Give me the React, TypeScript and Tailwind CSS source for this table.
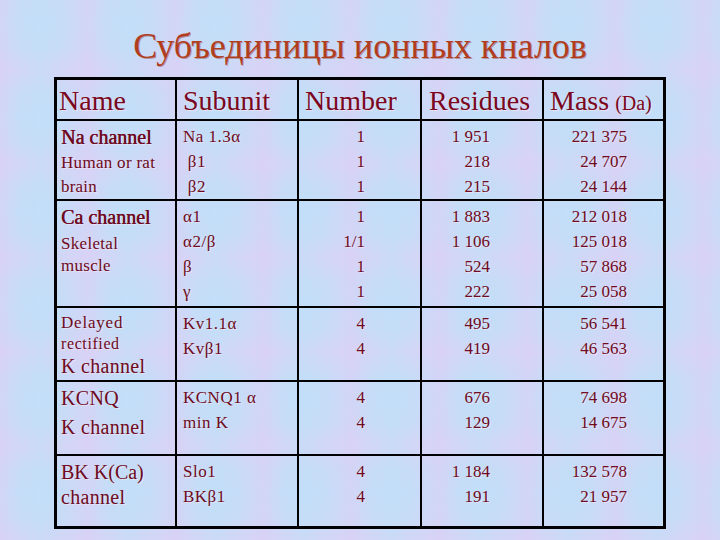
import React from "react";

type Line = { t: React.ReactNode; size?: number; lh: number; cls?: string };

const serif = "font-['Liberation_Serif','Times_New_Roman',serif]";
const ink = "text-[#6e0b22] [text-shadow:1px_1px_0_rgba(255,235,245,0.55)]";

function NameCell({ lines }: { lines: Line[] }) {
  return (
    <div className="pl-[4px] pt-[3px] flex flex-col">
      {lines.map((l, i) => (
        <div
          key={i}
          className={`whitespace-nowrap ${l.cls ?? ""}`}
          style={{ lineHeight: `${l.lh}px`, fontSize: `${l.size ?? 17}px` }}
        >
          {l.t}
        </div>
      ))}
    </div>
  );
}

function DataCell({ vals, align, pad, track }: { vals: React.ReactNode[]; align: "left" | "right"; pad: string; track?: boolean }) {
  return (
    <div className={`border-l-2 border-black pt-[3px] flex flex-col ${pad} ${align === "right" ? "items-end" : "items-start"}`}>
      {vals.map((v, i) => (
        <div key={i} className={`leading-[25px] text-[17px] whitespace-pre ${track ? "tracking-[0.5px]" : ""}`}>
          {v}
        </div>
      ))}
    </div>
  );
}

const cols = "grid grid-cols-[118px_122px_123px_122px_121px]";

type Row = {
  h: string;
  name: Line[];
  sub: React.ReactNode[];
  num: string[];
  res: string[];
  mass: string[];
};

const heavy = "[text-shadow:0.5px_0_0_#6e0b22,1px_1px_0_rgba(255,235,245,0.55)]";

const rows: Row[] = [
  {
    h: "h-[80px]",
    name: [
      { t: "Na channel", size: 20, lh: 26, cls: heavy },
      { t: "Human or rat", lh: 26, cls: "tracking-[0.3px]" },
      { t: "brain", lh: 22, cls: "tracking-[0.2px]" },
    ],
    sub: ["Na 1.3α", " β1", " β2"],
    num: ["1", "1", "1"],
    res: ["1 951", "218", "215"],
    mass: ["221 375", "24 707", "24 144"],
  },
  {
    h: "h-[107px]",
    name: [
      { t: "Ca channel", size: 20, lh: 26, cls: heavy },
      { t: "Skeletal", lh: 28, cls: "tracking-[0.3px]" },
      { t: "muscle", lh: 16, cls: "tracking-[0.3px]" },
    ],
    sub: ["α1", "α2/β", "β", "γ"],
    num: ["1", "1/1", "1", "1"],
    res: ["1 883", "1 106", "524", "222"],
    mass: ["212 018", "125 018", "57 868", "25 058"],
  },
  {
    h: "h-[74px]",
    name: [
      { t: "Delayed", lh: 24, cls: "tracking-[0.8px]" },
      { t: "rectified", size: 16, lh: 18, cls: "tracking-[0.6px]" },
      { t: "K channel", size: 20, lh: 26, cls: "tracking-[0.3px]" },
    ],
    sub: ["Kv1.1α", "Kvβ1"],
    num: ["4", "4"],
    res: ["495", "419"],
    mass: ["56 541", "46 563"],
  },
  {
    h: "h-[74px]",
    name: [
      { t: "KCNQ", size: 20, lh: 26, cls: "tracking-[0.3px]" },
      { t: "K channel", size: 20, lh: 32, cls: "tracking-[0.3px]" },
    ],
    sub: ["KCNQ1 α", "min K"],
    num: ["4", "4"],
    res: ["676", "129"],
    mass: ["74 698", "14 675"],
  },
  {
    h: "h-[70px]",
    name: [
      { t: "BK K(Ca)", size: 20, lh: 26 },
      { t: "channel", size: 20, lh: 24, cls: "tracking-[0.3px]" },
    ],
    sub: ["Slo1", "BKβ1"],
    num: ["4", "4"],
    res: ["1 184", "191"],
    mass: ["132 578", "21 957"],
  },
];

export default function App() {
  return (
    <div
      className={`w-[720px] h-[540px] overflow-hidden relative ${serif} bg-[#c8dbf6] bg-[image:repeating-linear-gradient(90deg,rgba(222,206,246,0.55)_0px,rgba(222,206,246,0)_18px,rgba(188,226,250,0.35)_40px,rgba(222,206,246,0)_62px,rgba(222,206,246,0.55)_88px),repeating-linear-gradient(0deg,rgba(224,208,246,0.45)_0px,rgba(224,208,246,0)_22px,rgba(190,224,252,0.3)_47px,rgba(224,208,246,0)_70px,rgba(224,208,246,0.45)_94px)]`}
    >
      <div className="flex flex-col items-center">
        <div className="h-[77px] flex items-start pt-[24px]">
          <h1 className="text-[36px] leading-[44px] text-[#b23d1d] [text-shadow:1px_1px_0_rgba(120,20,10,0.35)] whitespace-nowrap">
            Субъединицы ионных кналов
          </h1>
        </div>
        <div className={`w-[612px] border-[3px] border-black ${ink}`}>
          <div className={`${cols} h-[41px] border-b-2 border-black text-[28px] text-[#7a0620]`}>
            <div className="pl-[2px] flex items-center">Name</div>
            <div className="border-l-2 border-black pl-[6px] flex items-center">Subunit</div>
            <div className="border-l-2 border-black pl-[6px] flex items-center">Number</div>
            <div className="border-l-2 border-black pl-[7px] flex items-center">Residues</div>
            <div className="border-l-2 border-black pl-[6px] flex items-center whitespace-nowrap">
              Mass<span className="text-[20px] ml-[6px] mt-[4px]">(Da)</span>
            </div>
          </div>
          {rows.map((r, i) => (
            <div
              key={i}
              className={`${cols} ${r.h} ${i < rows.length - 1 ? "border-b-2 border-black" : ""}`}
            >
              <NameCell lines={r.name} />
              <DataCell vals={r.sub} align="left" pad="pl-[6px]" track />
              <DataCell vals={r.num} align="right" pad="pr-[55px]" />
              <DataCell vals={r.res} align="right" pad="pr-[52px]" />
              <DataCell vals={r.mass} align="right" pad="pr-[36px]" />
            </div>
          ))}
        </div>
      </div>
    </div>
  );
}
